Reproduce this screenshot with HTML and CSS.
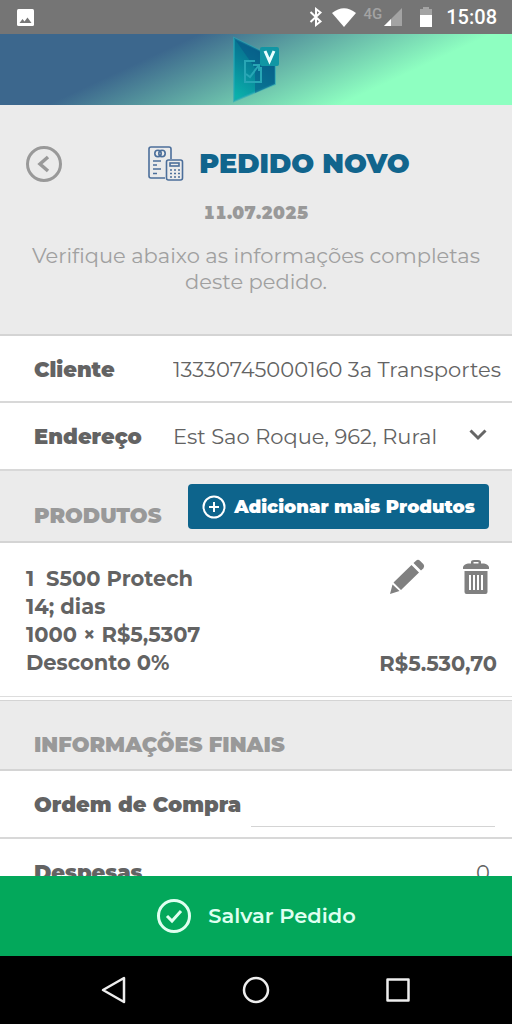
FILE: index.html
```html
<!DOCTYPE html>
<html lang="pt-BR">
<head>
<meta charset="utf-8">
<meta name="viewport" content="width=device-width, initial-scale=1">
<title>Pedido Novo</title>
<link rel="stylesheet" href="styles.css">
</head>
<body>
<div class="status">
  <svg width="17" height="17" viewBox="0 0 17 17"><rect width="17" height="17" rx="1.500" fill="#fff"/><path d="M2.500 14l3-4 2 2.500 3-4 4 5.500z" fill="#777"/></svg>
  <div class="status-right">
    <svg class="bluetooth" width="14" height="20" viewBox="0 0 14 20" fill="none" stroke="#fff" stroke-width="2"><path d="M1.500 5l10 9.500L7 18V2l4.500 3.500-10 9.500"/></svg>
    <svg class="wifi" width="24" height="19" viewBox="0 0 24 19"><path d="M0 5Q12-4.500 24 5L12 19z" fill="#fff"/></svg>
    <span class="network">4G</span>
    <svg class="signal" width="18" height="18" viewBox="0 0 18 18"><path d="M18 0v18H0z" fill="#a3a3a3"/><path d="M7 11v7H0z" fill="#fff"/></svg>
    <svg class="battery" width="12" height="20" viewBox="0 0 12 20"><path d="M0 2h3V0h6v2h3v6H0z" fill="#a3a3a3"/><path d="M0 8h12v12H0z" fill="#fff"/></svg>
    <time class="clock">15:08</time>
  </div>
</div>
<div class="banner">
  <svg width="52" height="67" viewBox="0 0 52 67" role="img" aria-label="Logo">
    <defs><linearGradient id="door" x1="0.700" y1="0" x2="0.200" y2="1"><stop offset="0" stop-color="#075c87"/><stop offset="0.500" stop-color="#078398"/><stop offset="1" stop-color="#0bb1ab"/></linearGradient></defs>
    <path d="M4 2l41 20v26L4 65z" fill="url(#door)" stroke="#24a9b7" stroke-opacity=".6" stroke-width="2"/>
    <path d="M4 2l41 20v26l-20 9V32z" fill="#075485" opacity=".5"/>
    <path d="M25 25H15v21h16V31M16 38l4 3 9-12M23 29h6v6" fill="none" stroke="#28a6b5" stroke-width="2"/>
    <rect x="30" y="11" width="19" height="19" rx="2" fill="#1196a4"/>
    <path d="M35 15l4.500 10L44 15" fill="none" stroke="#eaffff" stroke-width="3"/>
  </svg>
</div>
<main class="content">
  <header class="intro">
    <div class="title-row">
      <button class="icon-button" aria-label="Voltar"><svg width="36" height="36" viewBox="0 0 36 36" fill="none" stroke="#999" stroke-width="3"><circle cx="18" cy="18" r="16.500"/><path d="M22 11l-8 7 8 7" stroke-width="3.500"/></svg></button>
      <div class="title">
        <svg width="36" height="36" viewBox="0 0 36 36" fill="none" stroke="#4c6f9b" stroke-width="1.600"><path d="M17 32H3a2 2 0 0 1-2-2V3a2 2 0 0 1 2-2h18a2 2 0 0 1 2 2v10M5 15h8M5 19h4M5 23h8M5 27.500h4"/><circle cx="10" cy="7.500" r="3.200"/><circle cx="14" cy="7.500" r="3.200"/><rect x="18.500" y="14" width="16" height="20" rx="2"/><rect x="22" y="17" width="9" height="3"/><path d="M22 24h10M22 27.500h10M22 31h10" stroke-dasharray="2 2"/></svg>
        <h1>PEDIDO NOVO</h1>
      </div>
    </div>
    <time class="date">11.07.2025</time>
    <p class="hint">Verifique abaixo as informações completas deste pedido.</p>
  </header>
  <section>
    <div class="row"><span class="label">Cliente</span><span class="value">13330745000160 3a Transportes</span></div>
    <div class="row address"><label class="label" for="address">Endereço</label><select class="value" id="address"><option>Est Sao Roque, 962, Rural</option></select><svg class="chevron" width="18" height="12" viewBox="0 0 18 12" fill="none" stroke="#666" stroke-width="3"><path d="M1.500 1.500L9 9l7.500-7.500"/></svg></div>
  </section>
  <section>
    <div class="section-head products-head"><h2>PRODUTOS</h2>
      <button class="add"><svg width="24" height="24" viewBox="0 0 24 24" fill="none" stroke="#fff" stroke-width="2"><circle cx="12" cy="12" r="10.500"/><path d="M12 7v10M7 12h10"/></svg>Adicionar mais Produtos</button>
    </div>
    <article class="product">
      <div class="details"><p>1 &nbsp;S500 Protech</p><p>14; dias</p><p>1000 × R$5,5307</p><p>Desconto 0%</p></div>
      <div class="product-side">
        <div class="actions">
          <button class="icon-button" aria-label="Editar"><svg width="36" height="36" viewBox="0 0 36 36" fill="#808080"><path d="M1 35l2.500-9.500 7 6.500zM4.500 23.500L22.500 6l7.500 7.500L12 31zM24.500 4l2.500-2.300q2-1.700 4 0l3.500 3.500q1.500 2 0 4L32 11.500z"/></svg></button>
          <button class="icon-button" aria-label="Excluir"><svg width="26" height="36" viewBox="0 0 26 36" fill="#808080"><path d="M0 10V8q1-3 5-3.500h3V3q0-2 3-2h4q3 0 3 2v1.500h3q4 .5 5 3.500v2zM10.500 4.500h5V3h-5z" fill-rule="evenodd"/><path d="M1.500 12h23v21q0 2-2 2h-19q-2 0-2-2zM6 16v15h2V16zM10 16v15h2V16zM14 16v15h2V16zM18 16v15h2V16z" fill-rule="evenodd"/></svg></button>
        </div>
        <strong class="price">R$5.530,70</strong>
      </div>
    </article>
  </section>
  <section>
    <div class="section-head final-head"><h2>INFORMAÇÕES FINAIS</h2></div>
    <div class="row order"><label class="label" for="order">Ordem de Compra</label><input id="order" type="text"></div>
    <div class="row expenses"><span class="label">Despesas</span><span class="amount">0</span></div>
  </section>
</main>
<button class="save"><svg width="36" height="36" viewBox="0 0 36 36" fill="none" stroke="#dffff0" stroke-width="3"><circle cx="18" cy="18" r="15.500"/><path d="M11 18l5 5 9-10"/></svg>Salvar Pedido</button>
<nav class="system-nav" aria-label="Sistema">
  <button class="icon-button" aria-label="Voltar"><svg width="28" height="28" viewBox="0 0 28 28" fill="none" stroke="#eee" stroke-width="2.500" stroke-linejoin="round"><path d="M24 2v24L3 14z"/></svg></button>
  <button class="icon-button" aria-label="Início"><svg width="28" height="28" viewBox="0 0 28 28" fill="none" stroke="#eee" stroke-width="2.500"><circle cx="14" cy="14" r="12"/></svg></button>
  <button class="icon-button" aria-label="Recentes"><svg width="28" height="28" viewBox="0 0 28 28" fill="none" stroke="#eee" stroke-width="2.500" stroke-linejoin="round"><rect x="3.500" y="3.500" width="21" height="21"/></svg></button>
</nav>
</body>
</html>
```
FILE: styles.css
```css
* { box-sizing: border-box; }
body {
  margin: 0;
  height: 100vh;
  display: flex;
  flex-direction: column;
  background: #fff;
  color: #636363;
  font: 400 21px/28px Montserrat, Inter, sans-serif;
}
h1, h2, p { margin: 0; }
button, input, select { font: inherit; color: inherit; border: 0; }
svg { display: block; flex: none; }
.status {
  flex: none;
  height: 34px;
  padding: 0 15px 0 17px;
  display: flex;
  align-items: center;
  justify-content: space-between;
  background: #757575;
}
.status-right { display: flex; align-items: center; }
.wifi { margin: 0 8px 0 9px; }
.network { color: #a3a3a3; font: 500 15px/18px Roboto, sans-serif; margin-bottom: 6px; }
.signal { margin: 0 18px 0 2px; }
.clock { margin-left: 14px; color: #fff; font: 500 20px/24px Roboto, sans-serif; }
.banner {
  flex: none;
  height: 71px;
  display: flex;
  align-items: center;
  justify-content: center;
  background: linear-gradient(155deg, #3c678d 30%, #8effc1 74%);
}
.content { flex: 1; min-height: 0; overflow-y: auto; scrollbar-width: none; }
.intro {
  height: 231px;
  padding: 41px 26px 0;
  background: #ebebeb;
  border-bottom: 2px solid #d4d4d4;
  text-align: center;
}
.title-row { display: flex; align-items: center; }
.title { flex: 1; padding-left: 10px; display: flex; align-items: center; justify-content: center; gap: 15px; }
h1 { color: #11658d; font-size: 27px; line-height: 36px; font-weight: 900; }
.icon-button { padding: 0; background: none; cursor: pointer; }
.date { display: block; margin-top: 17px; color: #999; font-size: 17px; font-weight: 900; font-variant-numeric: tabular-nums; }
.hint { margin-top: 16px; color: #a0a0a0; line-height: 26px; }
.row {
  height: 67px;
  padding: 2px 0 0 34px;
  display: flex;
  align-items: center;
  border-bottom: 2px solid #d8d8d8;
}
.label { flex: none; min-width: 139px; font-weight: 900; }
.value { flex: 1; min-width: 0; padding: 0; background: none; white-space: nowrap; overflow: hidden; appearance: none; }
.address { height: 68px; padding-right: 25px; }
.chevron { margin-bottom: 4px; }
.section-head {
  padding: 0 23px 0 34px;
  display: flex;
  background: #ebebeb;
  border-bottom: 2px solid #d4d4d4;
}
h2 { color: #999; font-size: 21px; line-height: 28px; font-weight: 900; }
.products-head { height: 72px; padding-top: 13px; justify-content: space-between; align-items: flex-start; }
.products-head h2 { padding-top: 18px; }
.add {
  height: 45px;
  padding: 0 14px;
  display: flex;
  align-items: center;
  gap: 8px;
  border-radius: 4px;
  background: #0d648c;
  color: #fff;
  font-size: 18px;
  font-weight: 900;
  white-space: nowrap;
}
.product {
  height: 154px;
  padding: 16px 15px 18px 26px;
  display: flex;
  justify-content: space-between;
  border-bottom: 1px solid #ddd;
  font-weight: 700;
}
.details { padding-top: 6px; }
.product-side { display: flex; flex-direction: column; justify-content: space-between; align-items: flex-end; }
.actions { display: flex; gap: 38px; padding-right: 8px; }
.price { font-weight: 700; }
.final-head { height: 71px; margin-top: 3px; padding-top: 30px; border-top: 1px solid #d4d4d4; }
.order { height: 68px; padding-right: 17px; }
.order input { flex: 1; min-width: 0; height: 44px; margin-left: 10px; padding: 0; border-bottom: 1px solid #d4d4d4; border-radius: 0; background: none; }
.expenses { padding-right: 22px; justify-content: space-between; }
.save {
  flex: none;
  height: 80px;
  display: flex;
  align-items: center;
  justify-content: center;
  gap: 16px;
  background: #03a85b;
  color: #dffff0;
  font-weight: 600;
}
.system-nav {
  flex: none;
  height: 68px;
  padding: 0 100px;
  display: flex;
  align-items: center;
  justify-content: space-between;
  background: #000;
}
```
